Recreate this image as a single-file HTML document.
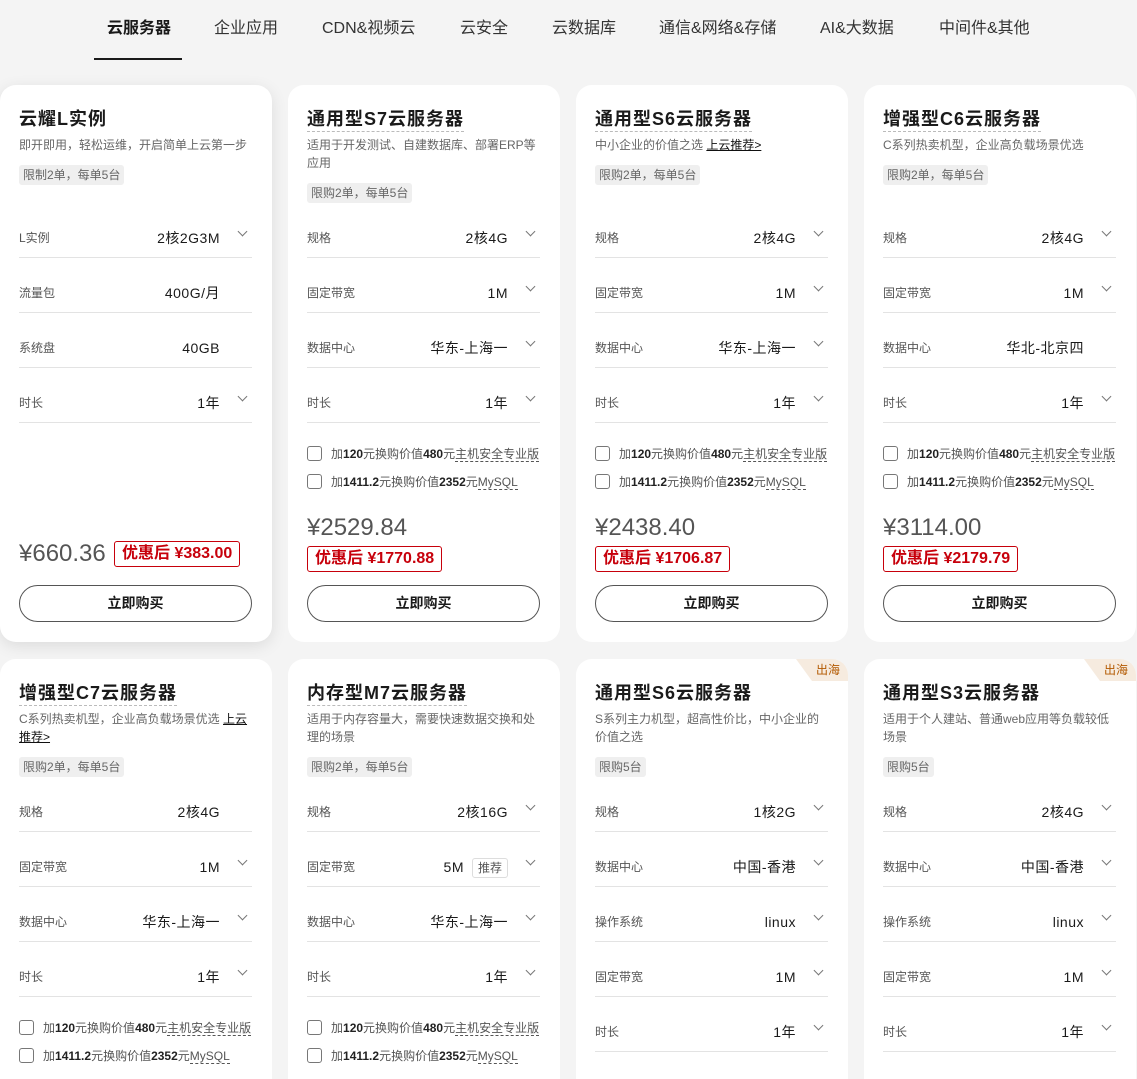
<!DOCTYPE html>
<html><head><meta charset="utf-8"><style>
*{margin:0;padding:0;box-sizing:border-box}
html,body{width:1137px;height:1079px;overflow:hidden}
body{background:#f4f4f4;font-family:"Liberation Sans","Noto Sans CJK SC",sans-serif;color:#252b3a;position:relative}
.nav{position:absolute;top:0;left:0;width:1137px;height:60px}
.nav span{position:absolute;top:19px;font-size:16px;color:#333;line-height:20px;white-space:nowrap}
.nav .act{font-weight:bold;color:#1a1a1a}
.ul{position:absolute;left:94px;top:58px;width:88px;height:2px;background:#1a1a1a}
.c{position:absolute;width:272px;height:557px;background:#fff;border-radius:16px;overflow:hidden}
.c.b2{height:420px;border-bottom-left-radius:0;border-bottom-right-radius:0}
.c.sh{box-shadow:0 4px 16px rgba(0,0,0,.10)}
.c>*{position:absolute;left:19px}
.t{top:22px;font-size:18px;font-weight:bold;line-height:24px;color:#1a1a1a;letter-spacing:1px;white-space:nowrap}
.t.d{border-bottom:1px dashed #bbb}
.ds{top:51px;width:230px;font-size:12px;line-height:18px;color:#666}
.ds u{color:#111}
.tg{height:20px;line-height:20px;font-size:12px;color:#666;background:#efefef;border-radius:3px;padding:0 4px}
.r{width:233px;height:48px;border-bottom:1px solid #e3e3e3;font-size:12px;color:#555}
.r .l{position:absolute;left:0;top:19px;line-height:18px}
.r .v{position:absolute;right:32px;top:18px;font-size:14px;color:#1a1a1a;line-height:20px;letter-spacing:.5px}
.r .ch{position:absolute;right:6px;top:18px;width:7px;height:7px;border-right:1px solid #777;border-bottom:1px solid #777;transform:rotate(45deg)}
.rec{display:inline-block;border:1px solid #ddd;border-radius:3px;font-size:12px;color:#555;padding:0 5px;line-height:18px;margin-left:8px;letter-spacing:0}
.cb{font-size:12px;color:#555;line-height:18px;white-space:nowrap}
.cb i{display:inline-block;width:15px;height:15px;border:1px solid #777;border-radius:3px;vertical-align:-3px;margin-right:9px}
.cb b{color:#222}
.cb s{text-decoration:none;border-bottom:1px dashed #555}
.p{font-size:24px;color:#555;line-height:28px}
.dc{height:26px;border:1px solid #c7000b;border-radius:3px;color:#c7000b;font-size:16px;font-weight:bold;line-height:24px;padding:0 7px;white-space:nowrap}
.btn{top:500px;width:233px;height:37px;border:1px solid #555;border-radius:19px;text-align:center;line-height:35px;font-size:14px;font-weight:bold;color:#1a1a1a}
.hai{position:absolute;left:auto!important;right:0;top:0;width:64px;height:22px;background:#f6ebdf;clip-path:polygon(12px 0,100% 0,100% 100%,28px 100%);color:#b35900;font-size:12px;line-height:22px;text-align:right;padding-right:8px}
</style></head><body>
<div class="nav">
<span class="act" style="left:107px">云服务器</span>
<span style="left:214px">企业应用</span>
<span style="left:322px">CDN&amp;视频云</span>
<span style="left:460px">云安全</span>
<span style="left:552px">云数据库</span>
<span style="left:659px">通信&amp;网络&amp;存储</span>
<span style="left:820px">AI&amp;大数据</span>
<span style="left:939px">中间件&amp;其他</span>
</div>
<div class="ul"></div>

<div class="c sh" style="left:0;top:85px">
<div class="t">云耀L实例</div>
<div class="ds">即开即用，轻松运维，开启简单上云第一步</div>
<div class="tg" style="top:80px">限制2单，每单5台</div>
<div class="r" style="top:125px"><span class="l">L实例</span><span class="v">2核2G3M</span><i class="ch"></i></div>
<div class="r" style="top:180px"><span class="l">流量包</span><span class="v">400G/月</span></div>
<div class="r" style="top:235px"><span class="l">系统盘</span><span class="v">40GB</span></div>
<div class="r" style="top:290px"><span class="l">时长</span><span class="v">1年</span><i class="ch"></i></div>
<div class="p" style="top:455px">¥660.36</div>
<div class="dc" style="top:456px;left:114px">优惠后 ¥383.00</div>
<div class="btn">立即购买</div>
</div>

<div class="c" style="left:288px;top:85px">
<div class="t d">通用型S7云服务器</div>
<div class="ds">适用于开发测试、自建数据库、部署ERP等应用</div>
<div class="tg" style="top:98px">限购2单，每单5台</div>
<div class="r" style="top:125px"><span class="l">规格</span><span class="v">2核4G</span><i class="ch"></i></div>
<div class="r" style="top:180px"><span class="l">固定带宽</span><span class="v">1M</span><i class="ch"></i></div>
<div class="r" style="top:235px"><span class="l">数据中心</span><span class="v">华东-上海一</span><i class="ch"></i></div>
<div class="r" style="top:290px"><span class="l">时长</span><span class="v">1年</span><i class="ch"></i></div>
<div class="cb" style="top:360px"><i></i>加<b>120</b>元换购价值<b>480</b>元<s>主机安全专业版</s></div>
<div class="cb" style="top:388px"><i></i>加<b>1411.2</b>元换购价值<b>2352</b>元<s>MySQL</s></div>
<div class="p" style="top:429px">¥2529.84</div>
<div class="dc" style="top:461px">优惠后 ¥1770.88</div>
<div class="btn">立即购买</div>
</div>

<div class="c" style="left:576px;top:85px">
<div class="t d">通用型S6云服务器</div>
<div class="ds">中小企业的价值之选 <u>上云推荐&gt;</u></div>
<div class="tg" style="top:80px">限购2单，每单5台</div>
<div class="r" style="top:125px"><span class="l">规格</span><span class="v">2核4G</span><i class="ch"></i></div>
<div class="r" style="top:180px"><span class="l">固定带宽</span><span class="v">1M</span><i class="ch"></i></div>
<div class="r" style="top:235px"><span class="l">数据中心</span><span class="v">华东-上海一</span><i class="ch"></i></div>
<div class="r" style="top:290px"><span class="l">时长</span><span class="v">1年</span><i class="ch"></i></div>
<div class="cb" style="top:360px"><i></i>加<b>120</b>元换购价值<b>480</b>元<s>主机安全专业版</s></div>
<div class="cb" style="top:388px"><i></i>加<b>1411.2</b>元换购价值<b>2352</b>元<s>MySQL</s></div>
<div class="p" style="top:429px">¥2438.40</div>
<div class="dc" style="top:461px">优惠后 ¥1706.87</div>
<div class="btn">立即购买</div>
</div>

<div class="c" style="left:864px;top:85px">
<div class="t d">增强型C6云服务器</div>
<div class="ds">C系列热卖机型，企业高负载场景优选</div>
<div class="tg" style="top:80px">限购2单，每单5台</div>
<div class="r" style="top:125px"><span class="l">规格</span><span class="v">2核4G</span><i class="ch"></i></div>
<div class="r" style="top:180px"><span class="l">固定带宽</span><span class="v">1M</span><i class="ch"></i></div>
<div class="r" style="top:235px"><span class="l">数据中心</span><span class="v">华北-北京四</span></div>
<div class="r" style="top:290px"><span class="l">时长</span><span class="v">1年</span><i class="ch"></i></div>
<div class="cb" style="top:360px"><i></i>加<b>120</b>元换购价值<b>480</b>元<s>主机安全专业版</s></div>
<div class="cb" style="top:388px"><i></i>加<b>1411.2</b>元换购价值<b>2352</b>元<s>MySQL</s></div>
<div class="p" style="top:429px">¥3114.00</div>
<div class="dc" style="top:461px">优惠后 ¥2179.79</div>
<div class="btn">立即购买</div>
</div>

<div class="c b2" style="left:0;top:659px">
<div class="t d">增强型C7云服务器</div>
<div class="ds">C系列热卖机型，企业高负载场景优选 <u>上云推荐&gt;</u></div>
<div class="tg" style="top:98px">限购2单，每单5台</div>
<div class="r" style="top:125px"><span class="l">规格</span><span class="v">2核4G</span></div>
<div class="r" style="top:180px"><span class="l">固定带宽</span><span class="v">1M</span><i class="ch"></i></div>
<div class="r" style="top:235px"><span class="l">数据中心</span><span class="v">华东-上海一</span><i class="ch"></i></div>
<div class="r" style="top:290px"><span class="l">时长</span><span class="v">1年</span><i class="ch"></i></div>
<div class="cb" style="top:360px"><i></i>加<b>120</b>元换购价值<b>480</b>元<s>主机安全专业版</s></div>
<div class="cb" style="top:388px"><i></i>加<b>1411.2</b>元换购价值<b>2352</b>元<s>MySQL</s></div>
</div>

<div class="c b2" style="left:288px;top:659px">
<div class="t d">内存型M7云服务器</div>
<div class="ds">适用于内存容量大，需要快速数据交换和处理的场景</div>
<div class="tg" style="top:98px">限购2单，每单5台</div>
<div class="r" style="top:125px"><span class="l">规格</span><span class="v">2核16G</span><i class="ch"></i></div>
<div class="r" style="top:180px"><span class="l">固定带宽</span><span class="v">5M<span class="rec">推荐</span></span><i class="ch"></i></div>
<div class="r" style="top:235px"><span class="l">数据中心</span><span class="v">华东-上海一</span><i class="ch"></i></div>
<div class="r" style="top:290px"><span class="l">时长</span><span class="v">1年</span><i class="ch"></i></div>
<div class="cb" style="top:360px"><i></i>加<b>120</b>元换购价值<b>480</b>元<s>主机安全专业版</s></div>
<div class="cb" style="top:388px"><i></i>加<b>1411.2</b>元换购价值<b>2352</b>元<s>MySQL</s></div>
</div>

<div class="c b2" style="left:576px;top:659px">
<div class="hai">出海</div>
<div class="t">通用型S6云服务器</div>
<div class="ds">S系列主力机型，超高性价比，中小企业的价值之选</div>
<div class="tg" style="top:98px">限购5台</div>
<div class="r" style="top:125px"><span class="l">规格</span><span class="v">1核2G</span><i class="ch"></i></div>
<div class="r" style="top:180px"><span class="l">数据中心</span><span class="v">中国-香港</span><i class="ch"></i></div>
<div class="r" style="top:235px"><span class="l">操作系统</span><span class="v">linux</span><i class="ch"></i></div>
<div class="r" style="top:290px"><span class="l">固定带宽</span><span class="v">1M</span><i class="ch"></i></div>
<div class="r" style="top:345px"><span class="l">时长</span><span class="v">1年</span><i class="ch"></i></div>
</div>

<div class="c b2" style="left:864px;top:659px">
<div class="hai">出海</div>
<div class="t">通用型S3云服务器</div>
<div class="ds">适用于个人建站、普通web应用等负载较低场景</div>
<div class="tg" style="top:98px">限购5台</div>
<div class="r" style="top:125px"><span class="l">规格</span><span class="v">2核4G</span><i class="ch"></i></div>
<div class="r" style="top:180px"><span class="l">数据中心</span><span class="v">中国-香港</span><i class="ch"></i></div>
<div class="r" style="top:235px"><span class="l">操作系统</span><span class="v">linux</span><i class="ch"></i></div>
<div class="r" style="top:290px"><span class="l">固定带宽</span><span class="v">1M</span><i class="ch"></i></div>
<div class="r" style="top:345px"><span class="l">时长</span><span class="v">1年</span><i class="ch"></i></div>
</div>
</body></html>
